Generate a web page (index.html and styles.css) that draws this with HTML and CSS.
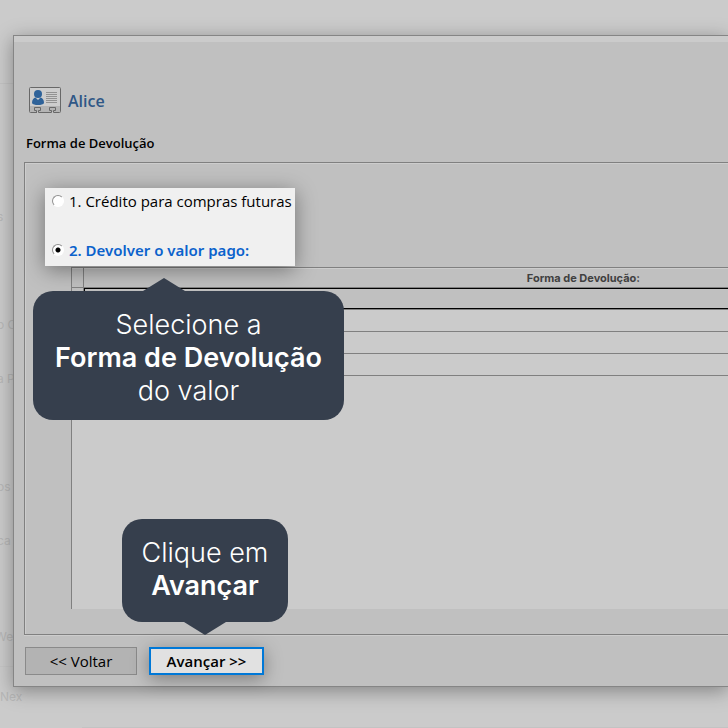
FILE: index.html
```html
<!DOCTYPE html>
<html lang="pt-BR">
<head>
  <meta charset="UTF-8" />
  <meta name="viewport" content="width=device-width, initial-scale=1.0"/>
  <title>Forma de Devolução</title>
  <link rel="stylesheet" href="styles.css">
</head>
<body>
  <div class="backdrop">
    <ul class="backdrop-menu">
      <li>s</li>
      <li></li>
      <li>o C</li>
      <li>a P</li>
      <li></li>
      <li>os</li>
      <li>ca</li>
    </ul>
    <ul class="backdrop-footer">
      <li>We</li>
      <li>Nex</li>
    </ul>
    <div class="backdrop-status"></div>
  </div>

  <form class="dialog">
    <div class="title-strip"></div>

    <header class="customer">
      <svg class="card-icon" width="32" height="27" viewBox="0 0 32 27" aria-hidden="true">
        <rect x="0.5" y="0.5" width="31" height="25" rx="1" fill="#cdcdcd"/>
        <rect x="1" y="19" width="30" height="6" fill="#b4b4b4"/>
        <path d="M7.500 25.500H1.500Q.5 25.500 .5 24.500V1.500Q.5 .5 1.500 .5H30.500Q31.500 .5 31.500 1.500V24.500Q31.500 25.500 30.500 25.500H24.500V23.500H26.500V20.500H20.500V23.500H22.500V25.500H9.500V23.500H11.500V20.500H5.500V23.500H7.500V26" fill="none" stroke="#686868"/>
        <circle cx="9" cy="7" r="4" fill="#2e6299"/>
        <path d="M3 16C3 12.500 4.500 11 6.500 10.500L9 13L11.500 10.500C13.500 11 15 12.500 15 16C14 18.700 4 18.700 3 16Z" fill="#2e6299"/>
        <path d="M17 5.500H28M17 7.500H28M17 9.500H28M17 11.500H28M17 13.500H28M17 15.500H28" stroke="#929292"/>
      </svg>
      <h1>Alice</h1>
    </header>

    <h2 class="section-title">Forma de Devolução</h2>

    <section class="panel">
      <div class="options">
        <label class="option">
          <input type="radio" name="devolucao" value="credito">
          1. Crédito para compras futuras
        </label>
        <label class="option selected">
          <input type="radio" name="devolucao" value="valor" checked>
          2. Devolver o valor pago:
        </label>
        <p class="tip tip-below">Selecione a<br><strong>Forma de Devolução</strong><br>do valor</p>
      </div>

      <div class="grid">
        <table>
          <thead>
            <tr><td class="gutter"></td><th scope="col">Forma de Devolução:</th></tr>
          </thead>
          <tbody>
            <tr class="current"><td class="gutter"></td><td></td></tr>
            <tr><td class="gutter"></td><td></td></tr>
            <tr><td class="gutter"></td><td></td></tr>
            <tr><td class="gutter"></td><td></td></tr>
          </tbody>
        </table>
      </div>
    </section>

    <footer class="actions">
      <button type="button" class="back">&lt;&lt; Voltar</button>
      <div class="next-wrap">
        <button type="button" class="next">Avançar &gt;&gt;</button>
        <p class="tip tip-above">Clique em<br><strong>Avançar</strong></p>
      </div>
    </footer>
  </form>
</body>
</html>
```
FILE: styles.css
```css
:root {
  --page: #cbcbcb;
  --face: #c0c0c0;
  --line: #808080;
  --light: #cdcdcd;
  --tip: #363f4d;
  --accent: #0078d7;
}

* {
  box-sizing: border-box;
  margin: 0;
  padding: 0;
}

body {
  position: relative;
  height: 100vh;
  overflow: hidden;
  background: var(--page);
  color: #000;
  font-family: "Open Sans", "Noto Sans", sans-serif;
  font-size: 15px;
}

/* dimmed application behind the dialog */
.backdrop {
  display: flex;
  flex-direction: column;
  height: 100%;
  color: #b7b7b7;
  font-family: Inter, sans-serif;
  font-size: 12px;
}

.backdrop::before {
  content: "";
  flex: none;
  height: 83px;
  border-bottom: 1px solid #c3c3c3;
}

.backdrop ul {
  list-style: none;
}

.backdrop-menu {
  margin-top: 106px;
  text-indent: -3px;
}

.backdrop-menu li {
  height: 54px;
  line-height: 54px;
}

.backdrop-footer {
  margin-top: 39px;
}

.backdrop-footer li {
  height: 60px;
  line-height: 60px;
}

.backdrop-footer li:first-child {
  border-bottom: 1px solid #c6c6c6;
  text-indent: -5px;
}

.backdrop-status {
  height: 2px;
  margin: auto 0 0 82px;
  background: #c3c3c3;
}

.dialog {
  position: absolute;
  top: 35px;
  left: 13px;
  right: 0;
  padding: 0 0 11px 10px;
  background: var(--face);
  border: 1px solid #858585;
  border-right: none;
  box-shadow: 0 4px 18px rgba(0, 0, 0, 0.35);
}

.title-strip {
  height: 6px;
  margin-left: -10px;
  background: var(--page);
}

.customer {
  display: flex;
  align-items: flex-start;
  gap: 7px;
  margin-top: 45px;
  padding-left: 5px;
}

.customer h1 {
  color: #2f5786;
  font-size: 16px;
  font-weight: 600;
  line-height: 28px;
}

.section-title {
  margin: 18px 0 9px 2px;
  font-size: 13px;
  font-weight: 600;
  line-height: 20px;
}

.panel {
  padding: 25px 0 25px 46px;
  border: 1px solid var(--line);
  border-right: none;
  box-shadow: inset 1px 1px var(--light), 0 1px var(--light);
}

.options {
  position: relative;
  z-index: 2;
  display: flex;
  flex-direction: column;
  gap: 25px;
  width: 250px;
  margin-left: -26px;
  padding: 1px 7px 4px;
  background: #f0f0f0;
  box-shadow: 0 4px 20px rgba(0, 0, 0, 0.4);
}

.option {
  display: flex;
  align-items: center;
  gap: 5px;
  line-height: 24px;
  white-space: nowrap;
}

.option.selected {
  color: #0b62cc;
  font-family: "Noto Sans", "Open Sans", sans-serif;
  font-weight: 600;
}

.option input {
  appearance: none;
  flex: none;
  width: 12px;
  height: 12px;
  border: 1px solid;
  border-color: #909090 #fff #fff #909090;
  border-radius: 50%;
  background: #fff;
}

.option input:checked {
  background: radial-gradient(circle, #000 2px, #fff 3px);
}

.grid {
  height: 342px;
  margin-top: 1px;
  background: var(--page);
  border-top: 1px solid var(--line);
  border-left: 1px solid var(--line);
}

table {
  width: 100%;
  border-collapse: separate;
  border-spacing: 0;
  table-layout: fixed;
}

td,
th {
  height: 22px;
  border-bottom: 1px solid var(--line);
}

.gutter {
  width: 12px;
  background: var(--face);
  border-right: 1px solid var(--line);
}

thead td,
thead th {
  height: 20px;
  background: var(--face);
  box-shadow: inset 0 1px var(--light);
}

th {
  padding-right: 88px;
  color: #404040;
  font-family: Inter, sans-serif;
  font-size: 11px;
  line-height: 18px;
  text-align: right;
}

.current td {
  height: 21px;
  background: var(--face);
  border-bottom-color: #000;
}

.current td:last-child {
  border-top: 1px solid #000;
  border-left: 1px solid #000;
}

.current + tr td {
  height: 23px;
  border-top: 1px solid var(--line);
}

.actions {
  display: flex;
  gap: 12px;
  margin-top: 12px;
  padding-left: 1px;
}

.actions button {
  height: 28px;
  font-family: inherit;
  font-size: 15px;
  line-height: 20px;
  white-space: nowrap;
}

.actions .back {
  width: 112px;
  background: #b3b3b3;
  border: 1px solid #8a8a8a;
}

.next-wrap {
  position: relative;
}

.actions .next {
  width: 115px;
  background: #e1e1e1;
  border: 2px solid var(--accent);
  box-shadow: 0 4px 18px rgba(0, 0, 0, 0.35);
  font-weight: 600;
}

/* callout bubbles */
.tip {
  position: absolute;
  z-index: 3;
  padding: 17px 0 13px;
  border-radius: 20px;
  background: var(--tip);
  color: #fff;
  font-family: Inter, sans-serif;
  font-size: 27px;
  font-weight: 300;
  line-height: 33px;
  text-align: center;
  white-space: nowrap;
}

.tip strong {
  font-weight: 600;
}

.tip::before {
  content: "";
  position: absolute;
  width: 42px;
  height: 13px;
  background: var(--tip);
}

.tip-below {
  top: 103px;
  left: -12px;
  width: 311px;
}

.tip-below::before {
  top: -13px;
  left: 110px;
  clip-path: polygon(50% 0, 100% 100%, 0 100%);
}

.tip-above {
  bottom: 53px;
  left: -27px;
  width: 166px;
  padding-bottom: 20px;
}

.tip-above::before {
  bottom: -13px;
  left: 62px;
  clip-path: polygon(0 0, 100% 0, 50% 100%);
}
```
